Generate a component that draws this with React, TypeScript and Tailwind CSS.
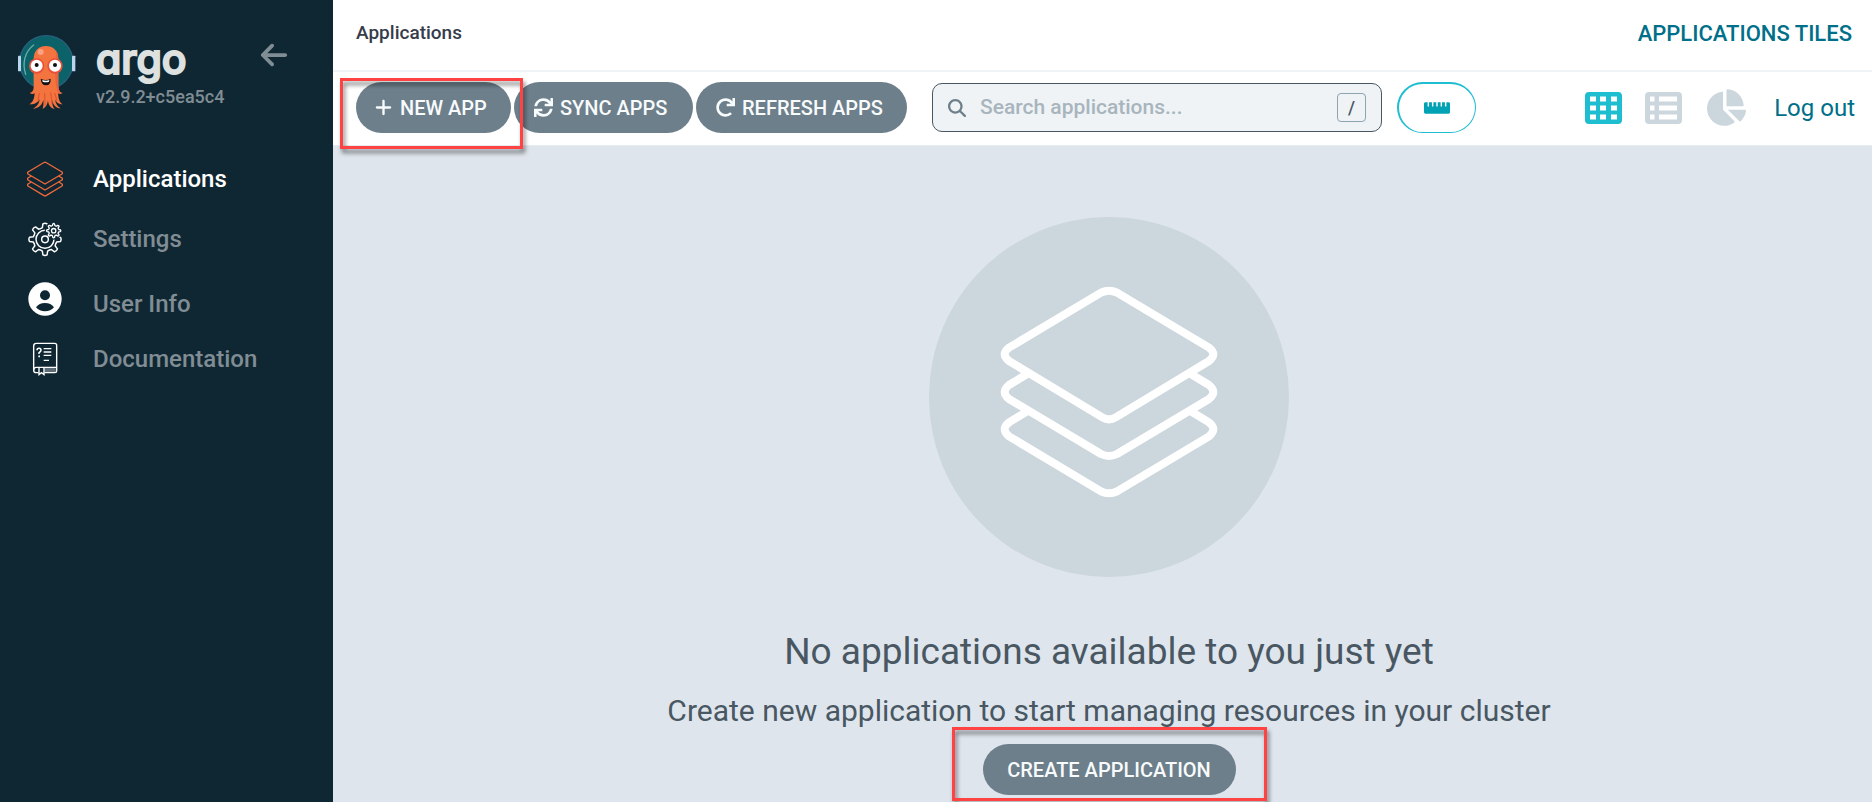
import type { ReactNode } from 'react';
import { FaChartPie, FaRedo, FaRulerHorizontal, FaSync } from 'react-icons/fa';
import { FaArrowLeft, FaMagnifyingGlass, FaPlus } from 'react-icons/fa6';

function Mascot() {
  return (
    <svg viewBox="0 0 240 252" className="h-[84px] w-20 shrink-0" aria-hidden="true">
      <circle cx="109" cy="94" r="80" fill="#0b6268" stroke="#28607e" strokeWidth="4" />
      <path d="M47 130C36 98 44 62 71 42" fill="none" stroke="#6fa9a9" strokeWidth="4" strokeLinecap="round" />
      <rect x="24" y="74" width="9" height="47" rx="2" fill="#b9d6ec" />
      <rect x="186" y="74" width="10" height="47" rx="2" fill="#b9d6ec" />
      <path
        d="M71 84C71 58 88 45 108 45S145 58 145 84V166C146 180 149 184 158 186C152 190 148 189 144 187C146 205 148 214 158 220C147 220 138 214 135 204C137 218 142 226 152 232C138 231 129 222 126 206C126 220 129 228 134 234C121 232 115 222 114 208C113 219 109 228 98 234C100 226 101 216 100 206C97 220 88 231 68 234C82 226 88 216 89 204C85 214 74 221 58 220C68 214 73 204 74 187C69 190 64 189 59 186C68 184 71 178 71 166Z"
        fill="#f4743f"
      />
      <path d="M138 60Q145 68 145 84V166Q147 180 151 184L144 185Q134 160 136 120Z" fill="#e9633f" />
      <path d="M88 186L84 210M104 186L105 224M122 184L126 218M134 186L141 210" stroke="#d9532f" strokeWidth="3" fill="none" />
      <circle cx="92" cy="63" r="9" fill="#f9a283" />
      <circle cx="80" cy="105" r="23" fill="#e8503a" />
      <circle cx="135" cy="105" r="23" fill="#e8503a" />
      <circle cx="80" cy="104" r="18" fill="#fff" />
      <circle cx="135" cy="104" r="18" fill="#fff" />
      <circle cx="80" cy="102" r="6" fill="#111" />
      <circle cx="135" cy="102" r="6" fill="#111" />
      <path d="M92 143Q108 151 122 143Q123 162 108 163Q94 162 92 143Z" fill="#161214" />
      <path d="M97 147Q108 151 118 147L117 152Q108 155 98 152Z" fill="#fff" />
    </svg>
  );
}

function LayersIcon() {
  return (
    <svg viewBox="0 0 108 108" className="size-9" fill="none" stroke="#f0693b" strokeWidth="4" strokeLinejoin="round" aria-hidden="true">
      <path d="M51 4.500Q54 3 57 4.500L105 33Q108 36 105 39L54 69L3 39Q0 36 3 33Z" />
      <path d="M13 45L3 51Q0 54 3 57L54 87L105 57Q108 54 105 51L95 45" />
      <path d="M13 63L3 69Q0 72 3 75L51 104Q54 106 57 104L105 75Q108 72 105 69L95 63" />
    </svg>
  );
}

function gearPath(cx: number, cy: number, root: number, tip: number, teeth: number) {
  const step = (Math.PI * 2) / teeth;
  const at = (r: number, a: number) => `${(cx + r * Math.sin(a)).toFixed(1)} ${(cy - r * Math.cos(a)).toFixed(1)}`;
  let d = '';
  for (let i = 0; i < teeth; i++) {
    const a = i * step;
    d += `${i === 0 ? 'M' : 'L'}${at(root, a - step * 0.28)}L${at(tip, a - step * 0.17)}`;
    d += `Q${at(tip + 3, a)} ${at(tip, a + step * 0.17)}L${at(root, a + step * 0.28)}`;
    d += `Q${at(root - 2, a + step * 0.5)} ${at(root, a + step * 0.72)}`;
  }
  return d + 'Z';
}

function GearsIcon() {
  return (
    <svg viewBox="0 0 108 108" className="size-9" fill="none" stroke="#fff" strokeWidth="4.400" strokeLinejoin="round" aria-hidden="true">
      <mask id="gear-cut">
        <rect width="108" height="108" fill="#fff" stroke="none" />
        <circle cx="80" cy="29" r="27" fill="#000" stroke="none" />
      </mask>
      <g mask="url(#gear-cut)">
        <path d={gearPath(54, 55, 36, 47, 8)} />
        <circle cx="54" cy="55" r="27" />
      </g>
      <circle cx="54" cy="55" r="10" />
      <path d={gearPath(80, 29, 16, 20, 8)} strokeWidth="4" />
      <circle cx="80" cy="29" r="6.500" strokeWidth="4" />
    </svg>
  );
}

function UserIcon() {
  return (
    <svg viewBox="0 0 102 102" className="size-[34px]" aria-hidden="true">
      <circle cx="51" cy="51" r="50" fill="#fff" />
      <circle cx="51" cy="40" r="15" fill="#0f2733" />
      <path d="M24 76Q33 63 51 63T78 76Q68 88 51 88T24 76Z" fill="#0f2733" />
    </svg>
  );
}

function BookIcon() {
  return (
    <svg viewBox="0 0 108 108" className="size-9" fill="none" stroke="#fff" strokeWidth="4.200" aria-hidden="true">
      <path d="M35 95H27Q20 95 20 87V15Q20 7 28 7H83Q89 7 89 13V90Q89 95 84 95H52" />
      <path d="M20 87Q20 79 28 79H89" />
      <path d="M53 84H86M53 90H86" strokeWidth="2" />
      <path d="M36 79V101L43.500 95L51 101V79" />
      <path d="M30 28Q30 22 36 22T42 28Q42 32 36 35V39" strokeWidth="4.500" />
      <path d="M34 46H39" strokeWidth="5" />
      <path d="M50 23H73M50 33H73M50 43H73M50 58H66" />
    </svg>
  );
}

function StackArt() {
  return (
    <svg viewBox="27 21 1080 1080" className="size-full" fill="none" stroke="#fff" strokeWidth="24" strokeLinejoin="round" aria-hidden="true">
      <path d="M543 248Q567 236 591 248L867 413Q893 433 867 453L587 622Q567 634 547 622L267 453Q241 433 267 413Z" />
      <path d="M320 493L267 525Q241 546 267 567L543 732Q567 744 591 732L867 567Q893 546 867 525L814 493" />
      <path d="M320 605L267 637Q241 658 267 679L543 844Q567 856 591 844L867 679Q893 658 867 637L814 605" />
    </svg>
  );
}

function TilesIcon() {
  return (
    <svg viewBox="0 0 37 32" className="h-8 w-[37px]" aria-hidden="true">
      <path
        fillRule="evenodd"
        fill="#1fbdd0"
        d="M4 0H33A4 4 0 0 1 37 4V28A4 4 0 0 1 33 32H4A4 4 0 0 1 0 28V4A4 4 0 0 1 4 0ZM5 4.500V9.500H11V4.500ZM15 4.500V9.500H21V4.500ZM26 4.500V9.500H32V4.500ZM5 13.500V18.500H11V13.500ZM15 13.500V18.500H21V13.500ZM26 13.500V18.500H32V13.500ZM5 22.500V27.500H11V22.500ZM15 22.500V27.500H21V22.500ZM26 22.500V27.500H32V22.500Z"
      />
    </svg>
  );
}

function ListIcon() {
  return (
    <svg viewBox="0 0 37 32" className="h-8 w-[37px]" aria-hidden="true">
      <path
        fillRule="evenodd"
        fill="#ccd6dd"
        d="M4 0H33A4 4 0 0 1 37 4V28A4 4 0 0 1 33 32H4A4 4 0 0 1 0 28V4A4 4 0 0 1 4 0ZM5 4.500V9.500H9.500V4.500ZM14 4.500V9.500H32V4.500ZM5 13.500V18.500H9.500V13.500ZM14 13.500V18.500H32V13.500ZM5 22.500V27.500H9.500V22.500ZM14 22.500V27.500H32V22.500Z"
      />
    </svg>
  );
}

function PillButton({ children, className }: { children: ReactNode; className: string }) {
  return (
    <button
      type="button"
      className={`flex h-[51px] items-center gap-[7px] rounded-full bg-[#6d7f8b] text-xl font-medium whitespace-nowrap text-[#f8fbfb] ${className}`}
    >
      {children}
    </button>
  );
}

function NavLink({ icon, label, className }: { icon: ReactNode; label: string; className: string }) {
  return (
    <a href="#" className={`flex items-center gap-[30px] pl-[27px] text-2xl font-medium ${className}`}>
      <span className="flex w-9 justify-center">{icon}</span>
      <span>{label}</span>
    </a>
  );
}

export default function App() {
  return (
    <div className="flex min-h-screen bg-[#dee5ec] font-[Roboto,sans-serif]">
      <aside className="w-[333px] shrink-0 bg-[#0f2733]">
        <div className="flex h-[149px] items-start pt-[31px] pl-[10px]">
          <Mascot />
          <div className="pl-[6px]">
            <div className="pt-[2px] font-[Inter,sans-serif] text-[41px] leading-[52px] font-medium text-[#dde1e0] [font-feature-settings:'cv11'] [-webkit-text-stroke:2px_#dde1e0]">
              argo
            </div>
            <div className="text-lg leading-6 font-medium text-[#818d94]">v2.9.2+c5ea5c4</div>
          </div>
          <button type="button" aria-label="Collapse sidebar" className="mt-[9px] ml-[35px] text-[#818d94]">
            <FaArrowLeft size={30} />
          </button>
        </div>
        <nav aria-label="Main">
          <NavLink icon={<LayersIcon />} label="Applications" className="h-[60px] text-white" />
          <NavLink icon={<GearsIcon />} label="Settings" className="h-[60px] text-[#818d94]" />
          <a href="#" className="flex h-[70px] items-start gap-[30px] pt-[13px] pl-[27px] text-2xl font-medium text-[#818d94]">
            <span className="flex w-9 justify-center">
              <UserIcon />
            </span>
            <span className="pt-[6px]">User Info</span>
          </a>
          <NavLink icon={<BookIcon />} label="Documentation" className="h-10 text-[#818d94]" />
        </nav>
      </aside>

      <div className="flex min-w-0 flex-1 flex-col">
        <header className="flex h-[72px] items-center justify-between border-b-2 border-[#eff3f6] bg-white pr-5 pb-1 pl-[23px]">
          <h1 className="text-[19px] font-medium text-[#363c4a]">Applications</h1>
          <span className="text-[22px] font-medium text-[#006f8a]">APPLICATIONS TILES</span>
        </header>

        <div className="flex h-[74px] items-center border-b border-[#e6ecf0] bg-white pr-[17px] pb-[2px] pl-[23px]">
          <div className="flex gap-[3px]">
            <div className="relative">
              <PillButton className="w-[155px] pl-[18px]">
                <FaPlus size={19} />
                NEW APP
              </PillButton>
              <div className="pointer-events-none absolute -top-1 -right-3 -bottom-4 -left-4 z-10 border-3 border-[#ff4343] drop-shadow-[2px_4px_2px_rgba(0,0,0,0.5)]" />
            </div>
            <PillButton className="w-[179px] pl-5">
              <FaSync size={19} />
              SYNC APPS
            </PillButton>
            <PillButton className="w-[211px] pl-5">
              <FaRedo size={19} />
              REFRESH APPS
            </PillButton>
          </div>

          <label className="ml-[25px] flex h-[49px] w-[450px] items-center rounded-[10px] border border-[#495763] bg-[#eff3f6] pr-[15px] pl-[15px]">
            <FaMagnifyingGlass size={18} className="shrink-0 text-[#6d7f8b]" />
            <input
              type="text"
              aria-label="Search applications"
              placeholder="Search applications..."
              className="ml-[14px] min-w-0 flex-1 bg-transparent text-[21px] font-medium outline-none placeholder:text-[#a8b5bd]"
            />
            <kbd className="flex size-[29px] items-center justify-center rounded border border-[#8fa4b1] font-[Roboto,sans-serif] text-lg font-medium text-[#495763]">
              /
            </kbd>
          </label>

          <button
            type="button"
            aria-label="Toggle compact view"
            className="ml-[15px] flex h-[51px] w-[79px] items-center justify-center rounded-full border border-t-2 border-l-2 border-[#1fbdd0] text-[#00a2b3]"
          >
            <FaRulerHorizontal size={26} />
          </button>

          <div className="ml-auto flex items-center">
            <button type="button" aria-label="Tiles">
              <TilesIcon />
            </button>
            <button type="button" aria-label="List" className="ml-[23px]">
              <ListIcon />
            </button>
            <button type="button" aria-label="Summary" className="ml-[25px] text-[#ccd6dd]">
              <FaChartPie size={39} />
            </button>
            <a href="#" className="ml-7 text-2xl text-[#006f8a]">
              Log out
            </a>
          </div>
        </div>

        <main className="flex flex-col items-center pt-[71px] pl-[13px] text-[#495763]">
          <div className="size-[360px] rounded-full bg-[#ccd6dd]">
            <StackArt />
          </div>
          <h2 className="mt-[51px] text-[37px] leading-[48px]">No applications available to you just yet</h2>
          <p className="mt-[15px] text-[30px] leading-[40px]">Create new application to start managing resources in your cluster</p>
          <div className="relative mt-[13px]">
            <PillButton className="w-[253px] justify-center">CREATE APPLICATION</PillButton>
            <div className="pointer-events-none absolute -inset-x-[31px] -top-[17px] -bottom-[6px] border-3 border-[#ff4343] drop-shadow-[2px_4px_2px_rgba(0,0,0,0.5)]" />
          </div>
        </main>
      </div>
    </div>
  );
}
